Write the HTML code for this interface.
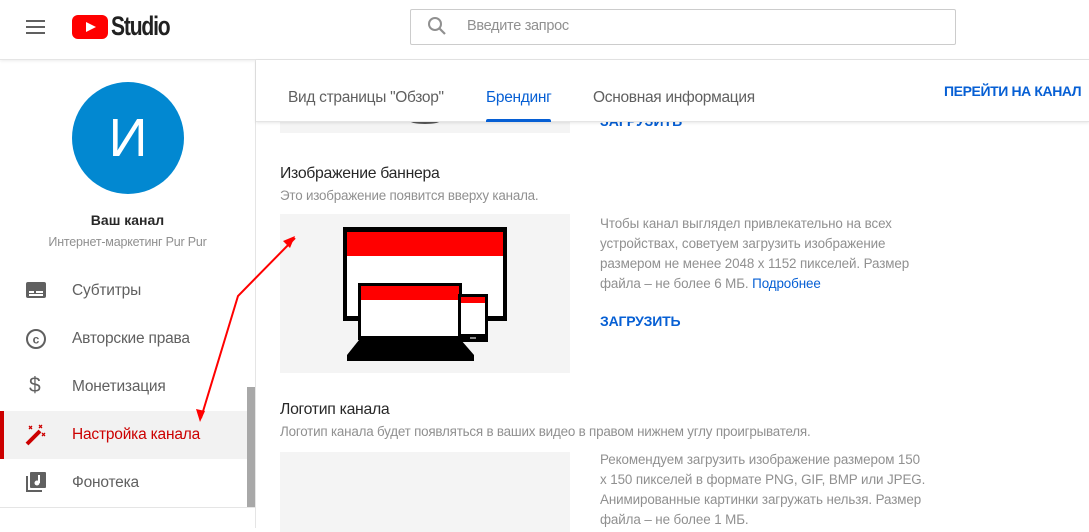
<!DOCTYPE html>
<html><head><meta charset="utf-8"><style>
*{margin:0;padding:0;box-sizing:border-box}
body{width:1089px;height:528px;overflow:hidden;background:#fff;font-family:"Liberation Sans",sans-serif;position:relative;color:#282828}
.a{position:absolute;white-space:nowrap}
.g{color:#909090}
.s{font-size:13.4px;letter-spacing:-0.2px}
.p{font-size:13.4px;color:#909090;line-height:20px;letter-spacing:-0.1px;white-space:normal}
.nav{position:absolute;left:0;width:247px;height:48px}
.nav span{position:absolute;left:72px;top:15px;font-size:15.5px;color:#606060;letter-spacing:-0.2px}
</style></head><body>
<div class="a" style="left:0;top:0;width:1089px;height:60px;border-bottom:1px solid #e5e5e5;box-shadow:0 1px 3px rgba(0,0,0,.08)"></div>
<div class="a" style="left:26px;top:20px;width:19px;height:2px;background:#606060;box-shadow:0 6px 0 #606060,0 12px 0 #606060"></div>
<svg class="a" style="left:72px;top:15px" width="36" height="24" viewBox="0 0 36 24"><rect x="0" y="0" width="36" height="24" rx="6" fill="#f00"/><path d="M14 7 L24 12 L14 17Z" fill="#fff"/></svg>
<div class="a" style="left:111px;top:11px;font-size:27px;font-weight:bold;letter-spacing:-1.5px;transform:scaleX(.78);transform-origin:left;color:#212121">Studio</div>
<div class="a" style="left:410px;top:9px;width:546px;height:36px;border:1px solid #ccc;border-radius:2px"></div>
<svg class="a" style="left:427px;top:16px" width="20" height="22" viewBox="0 0 20 22"><circle cx="8" cy="8" r="6" fill="none" stroke="#909090" stroke-width="2"/><path d="M12.5 12.5 L18 18" stroke="#909090" stroke-width="2.2"/></svg>
<div class="a g" style="left:467px;top:18px;font-size:14.5px;letter-spacing:-0.3px">Введите запрос</div>
<div class="a" style="left:255px;top:60px;width:1px;height:468px;background:#e5e5e5"></div>
<div class="a" style="left:72px;top:82px;width:112px;height:112px;border-radius:50%;background:#0288d1;color:#fff;font-size:54px;text-align:center;line-height:112px">И</div>
<div class="a" style="left:0;width:255px;top:212px;text-align:center;font-size:14px;font-weight:bold;color:#282828">Ваш канал</div>
<div class="a g" style="left:0;width:255px;top:235px;text-align:center;font-size:12.5px;letter-spacing:-0.2px">Интернет-маркетинг Pur Pur</div>
<div class="nav" style="top:267px"><svg class="a" style="left:26px;top:14px" width="20" height="18"><rect x="0" y="1" width="20" height="16" rx="2" fill="#606060"/><rect x="3" y="10" width="5" height="2" fill="#fff"/><rect x="10" y="10" width="7" height="2" fill="#fff"/><rect x="3" y="13" width="14" height="2" fill="#fff"/></svg><span>Субтитры</span></div>
<div class="nav" style="top:315px"><svg class="a" style="left:25px;top:13px" width="22" height="22"><circle cx="11" cy="11" r="9" fill="none" stroke="#606060" stroke-width="2"/><text x="11" y="15.5" font-size="12" font-weight="bold" text-anchor="middle" fill="#606060" font-family="Liberation Sans">c</text></svg><span>Авторские права</span></div>
<div class="nav" style="top:363px"><div class="a" style="left:29px;top:11px;font-size:21px;color:#606060">$</div><span>Монетизация</span></div>
<div class="nav" style="top:411px;background:#f2f2f2"><div class="a" style="left:0;top:0;width:4px;height:48px;background:#c00"></div><svg class="a" style="left:25px;top:13px" width="22" height="22"><path d="M2 20 L15 7" stroke="#c00" stroke-width="4"/><g stroke="#c00" stroke-width="1.3"><path d="M4 2l3 3M7 2l-3 3M14 1l3 3M17 1l-3 3M17 9l3 3M20 9l-3 3"/></g></svg><span style="color:#c00">Настройка канала</span></div>
<div class="nav" style="top:459px"><svg class="a" style="left:26px;top:13px" width="20" height="22"><rect x="4" y="0" width="16" height="16" rx="1" fill="#606060"/><path d="M1 4 V19 H16" stroke="#606060" stroke-width="2" fill="none"/><path d="M13 3 V11" stroke="#fff" stroke-width="2"/><circle cx="11" cy="11" r="2.5" fill="#fff"/></svg><span>Фонотека</span></div>
<div class="a" style="left:0;top:507px;width:255px;height:1px;background:#e5e5e5"></div>
<div class="a" style="left:247px;top:387px;width:8px;height:120px;background:#a8a8a8"></div>
<div class="a" style="left:280px;top:110px;width:290px;height:23px;background:#f4f4f4"></div>
<div class="a" style="left:410px;top:118px;width:30px;height:6px;border-radius:50%;background:#555"></div>
<div class="a" style="left:600px;top:113px;font-size:14px;font-weight:bold;color:#065fd4">ЗАГРУЗИТЬ</div>
<div class="a" style="left:256px;top:60px;width:833px;height:62px;background:#fff;border-bottom:1px solid #e5e5e5;box-shadow:0 1px 3px rgba(0,0,0,.1)"></div>
<div class="a" style="left:288px;top:89px;font-size:15.5px;color:#606060;letter-spacing:-0.3px">Вид страницы "Обзор"</div>
<div class="a" style="left:486px;top:89px;font-size:15.5px;color:#065fd4;letter-spacing:-0.3px">Брендинг</div>
<div class="a" style="left:486px;top:119px;width:65px;height:3px;background:#065fd4;border-radius:2px 2px 0 0"></div>
<div class="a" style="left:593px;top:89px;font-size:15.5px;color:#606060;letter-spacing:-0.3px">Основная информация</div>
<div class="a" style="left:944px;top:83px;font-size:14px;color:#065fd4;font-weight:bold;letter-spacing:-0.4px">ПЕРЕЙТИ НА КАНАЛ</div>
<div class="a" style="left:280px;top:165px;font-size:15.8px;color:#282828;letter-spacing:-0.3px">Изображение баннера</div>
<div class="a g s" style="left:280px;top:188px">Это изображение появится вверху канала.</div>
<div class="a" style="left:280px;top:214px;width:290px;height:159px;background:#f4f4f4"></div>
<svg class="a" style="left:280px;top:214px" width="290" height="159" viewBox="0 0 290 159">
<rect x="63" y="13" width="164" height="94" fill="#000"/><rect x="67" y="18" width="156" height="24" fill="#f00"/><rect x="67" y="42" width="156" height="60" fill="#fff"/>
<rect x="78" y="69" width="104" height="57" fill="#000"/><rect x="81" y="72" width="98" height="14" fill="#f00"/><rect x="81" y="86" width="98" height="36" fill="#fff"/>
<path d="M79 126 L181 126 L194 141 L194 147 L67 147 L67 141 Z" fill="#000"/>
<rect x="178" y="80" width="30" height="48" fill="#000"/><rect x="181" y="83" width="24" height="6" fill="#f00"/><rect x="181" y="89" width="24" height="31" fill="#fff"/><rect x="190" y="123" width="6" height="2" fill="#888"/>
</svg>
<div class="a p" style="left:600px;top:214px;width:325px">Чтобы канал выглядел привлекательно на всех устройствах, советуем загрузить изображение размером не менее 2048 x 1152 пикселей. Размер файла – не более 6 МБ. <span style="color:#065fd4">Подробнее</span></div>
<div class="a" style="left:600px;top:313px;font-size:14px;font-weight:bold;color:#065fd4;letter-spacing:-0.2px">ЗАГРУЗИТЬ</div>
<div class="a" style="left:280px;top:401px;font-size:15.8px;color:#282828;letter-spacing:-0.3px">Логотип канала</div>
<div class="a g s" style="left:280px;top:424px">Логотип канала будет появляться в ваших видео в правом нижнем углу проигрывателя.</div>
<div class="a" style="left:280px;top:452px;width:290px;height:80px;background:#f4f4f4"></div>
<div class="a p" style="left:600px;top:450px;width:330px">Рекомендуем загрузить изображение размером 150 x 150 пикселей в формате PNG, GIF, BMP или JPEG. Анимированные картинки загружать нельзя. Размер файла – не более 1 МБ.</div>
<svg class="a" style="left:0;top:0" width="1089" height="528"><g stroke="#f00" stroke-width="2" fill="none"><path d="M295 238 L238 296 L201 418"/></g><path d="M295 236 L283 241 L290 248Z" fill="#f00"/><path d="M200 422 L196 409 L205 411Z" fill="#f00"/></svg>
</body></html>
